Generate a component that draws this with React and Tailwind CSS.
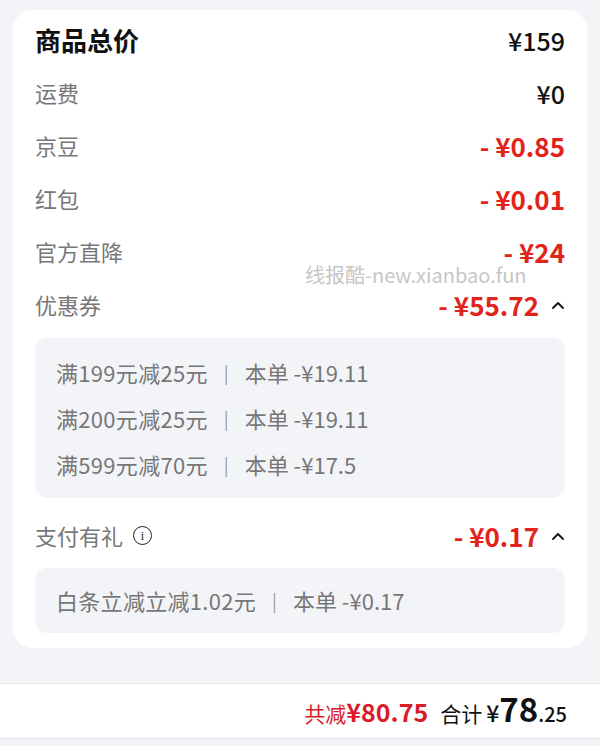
import React from "react";

const F = { fontFamily: '"Noto Sans CJK SC", "Noto Sans", sans-serif' };

function Chevron() {
  return (
    <svg width="14" height="10" viewBox="0 0 14 10" className="ml-[12px]">
      <polyline points="2,8 7,3 12,8" fill="none" stroke="#111" strokeWidth="1.8" strokeLinecap="round" strokeLinejoin="round" />
    </svg>
  );
}

function Row({ label, value, red, chevron, extra, bold }) {
  return (
    <div className="flex h-[53px] items-center justify-between">
      <div className="flex items-center">
        <span className={bold ? "text-[26px] font-bold text-[#111]" : "text-[22px] text-[#777]"}>{label}</span>
        {extra}
      </div>
      <div className="flex items-center">
        <span className={red ? "text-[26px] leading-[26px] font-bold text-[#e2231a]" : "text-[25px] leading-[26px] font-medium text-[#111]"}>{value}</span>
        {chevron && <Chevron />}
      </div>
    </div>
  );
}

function Detail({ a, b }) {
  return (
    <div className="flex h-[46px] items-center text-[22px] text-[#777]">
      <span className="tracking-[0.3px]">{a}</span>
      <span className="mx-[16px] text-[#999] text-[18px]">|</span>
      <span>本单 {b}</span>
    </div>
  );
}

export default function App() {
  return (
    <div className="w-[600px] h-[746px] bg-[#f3f4f8] overflow-hidden flex flex-col" style={F}>
      <div className="pt-[10px] px-[13px]">
        <div className="relative bg-white rounded-[20px] px-[22px] pt-[3px] pb-[15px]">
          <Row label="商品总价" value="¥159" bold />
          <Row label="运费" value="¥0" />
          <Row label="京豆" value="- ¥0.85" red />
          <Row label="红包" value="- ¥0.01" red />
          <Row label="官方直降" value="- ¥24" red />
          <Row label="优惠券" value="- ¥55.72" red chevron />
          <div className="mt-[7px] bg-[#f3f4f8] rounded-[12px] px-[21px] py-[11px]">
            <Detail a="满199元减25元" b="-¥19.11" />
            <Detail a="满200元减25元" b="-¥19.11" />
            <Detail a="满599元减70元" b="-¥17.5" />
          </div>
          <div className="mt-[11px]">
            <Row
              label="支付有礼"
              value="- ¥0.17"
              red
              chevron
              extra={
                <span className="ml-[10px] flex h-[19px] w-[19px] items-center justify-center rounded-full border-[1.5px] border-[#222] text-[12px] leading-none text-[#222]" style={{ fontFamily: '"Liberation Serif", serif' }}>
                  i
                </span>
              }
            />
          </div>
          <div className="mt-[6px] bg-[#f3f4f8] rounded-[12px] px-[21px] h-[65px] flex items-center">
            <div className="flex items-center text-[22px] text-[#777]">
              <span className="tracking-[0.3px]">白条立减立减1.02元</span>
              <span className="mx-[16px] text-[#999] text-[18px]">|</span>
              <span>本单 -¥0.17</span>
            </div>
          </div>
          <div className="absolute left-[292px] top-[255px] text-[20px] leading-[20px] text-[#c6c6c6] whitespace-nowrap">
            线报酷-new.xianbao.fun
          </div>
        </div>
      </div>
      <div className="mt-[35px] h-[56px] bg-white border-t border-b border-[#e6e6ea] flex items-center justify-end pr-[33px]">
        <div className="flex items-baseline">
          <span className="text-[21px] text-[#d91c2a]">共减</span>
          <span className="text-[25px] font-bold text-[#d91c2a]">¥80.75</span>
          <span className="ml-[12px] text-[21px] text-[#111]">合计</span>
          <span className="ml-[4px] text-[23px] font-medium text-[#111]">¥</span>
          <span className="text-[33px] font-bold text-[#111] leading-none">78</span>
          <span className="text-[20px] font-medium text-[#111]">.25</span>
        </div>
      </div>
    </div>
  );
}
